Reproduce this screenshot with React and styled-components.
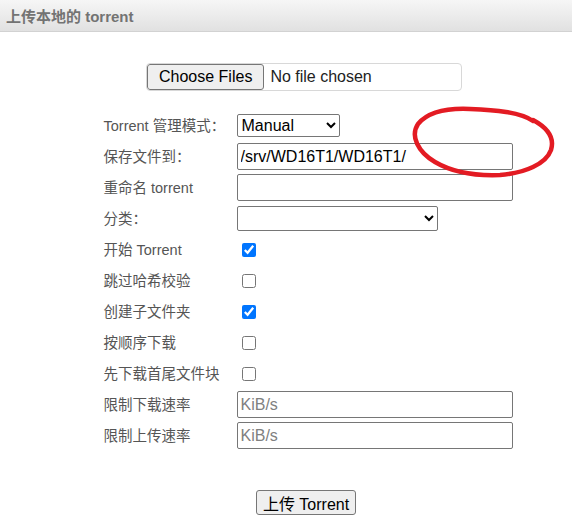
import React from 'react';
import styled, { createGlobalStyle } from 'styled-components';

const GlobalStyle = createGlobalStyle`
  body {
    margin: 0;
    background: #ffffff;
    font-family: "Liberation Sans", "Noto Sans CJK SC", sans-serif;
  }
`;

const Page = styled.div`
  position: relative;
  min-height: 530px;
`;

const Header = styled.div`
  height: 31px;
  display: flex;
  align-items: center;
  padding-left: 6px;
  background: linear-gradient(#f6f6f6, #e1e1e1);
  border-bottom: 1px solid #d2d2d2;
  color: #737373;
  font-size: 15px;
  font-weight: bold;
`;

const Body = styled.form`
  display: flex;
  flex-direction: column;
  align-items: center;
  padding-left: 40px;
`;

const FileInput = styled.input`
  margin: 31px 4px 0 0;
  width: 316px;
  height: 28px;
  box-sizing: border-box;
  border: 1px solid #d8d8d8;
  border-radius: 4px;
  font-family: "Liberation Sans", sans-serif;
  font-size: 16px;
  color: #222;

  &::file-selector-button {
    height: 26px;
    margin: 0 6px 0 0;
    padding: 0 11px;
    font-family: "Liberation Sans", sans-serif;
    font-size: 16px;
    color: #000;
    background: #efefef;
    border: 1px solid #767676;
    border-radius: 3px;
  }
`;

const Grid = styled.div`
  margin-top: 19px;
  display: grid;
  grid-template-columns: 137px 276px;
  grid-auto-rows: 31px;
  align-items: center;
`;

const Label = styled.label`
  padding-left: 4px;
  margin-top: -2px;
  font-size: 14.5px;
  color: #555;
  white-space: nowrap;
`;

const Select = styled.select`
  width: ${(p) => p.$w}px;
  height: ${(p) => p.$h}px;
  box-sizing: border-box;
  border: 1px solid #767676;
  border-radius: 2px;
  background: #fff;
  font-family: "Liberation Sans", sans-serif;
  font-size: 16px;
  color: #000;
`;

const TextInput = styled.input`
  width: 276px;
  height: 27px;
  box-sizing: border-box;
  padding: 1px 3px;
  border: 1px solid #767676;
  border-radius: 2px;
  font-family: "Liberation Sans", sans-serif;
  font-size: 16px;
  color: #000;

  &::placeholder {
    color: #808080;
  }
`;

const Check = styled.input`
  margin: 0 0 0 5px;
  width: 14px;
  height: 14px;
  justify-self: start;
`;

const UploadButton = styled.button`
  margin-top: 39px;
  height: 25px;
  padding: 0 6px;
  background: #efefef;
  border: 1px solid #767676;
  border-radius: 3px;
  font-family: "Liberation Sans", "Noto Sans CJK SC", sans-serif;
  font-size: 16px;
  color: #000;
`;

const Scribble = styled.svg`
  position: absolute;
  left: 0;
  top: 0;
  pointer-events: none;
`;

const checks = [
  ['开始 Torrent', true],
  ['跳过哈希校验', false],
  ['创建子文件夹', true],
  ['按顺序下载', false],
  ['先下载首尾文件块', false],
];

export default function App() {
  return (
    <Page>
      <GlobalStyle />
      <Header>上传本地的 torrent</Header>
      <Body onSubmit={(e) => e.preventDefault()}>
        <FileInput type="file" multiple />
        <Grid>
          <Label>Torrent 管理模式：</Label>
          <Select $w={103} $h={23} defaultValue="Manual">
            <option>Manual</option>
            <option>Automatic</option>
          </Select>
          <Label>保存文件到：</Label>
          <TextInput type="text" defaultValue="/srv/WD16T1/WD16T1/" />
          <Label>重命名 torrent</Label>
          <TextInput type="text" />
          <Label>分类：</Label>
          <Select $w={201} $h={25}>
            <option></option>
          </Select>
          {checks.map(([text, on]) => (
            <React.Fragment key={text}>
              <Label>{text}</Label>
              <Check type="checkbox" defaultChecked={on} />
            </React.Fragment>
          ))}
          <Label>限制下载速率</Label>
          <TextInput type="text" placeholder="KiB/s" />
          <Label>限制上传速率</Label>
          <TextInput type="text" placeholder="KiB/s" />
        </Grid>
        <UploadButton type="submit">上传 Torrent</UploadButton>
      </Body>
      <Scribble width="572" height="530">
        <path
          d="M533 121 C 520 112, 495 110, 470 109 C 448 108, 428 112, 418 124 C 410 136, 418 152, 435 162 C 452 172, 475 176, 500 175 C 525 173, 546 164, 551 150 C 555 137, 546 127, 533 120"
          fill="none"
          stroke="#e31b23"
          strokeWidth="4.5"
          strokeLinecap="round"
        />
      </Scribble>
    </Page>
  );
}
